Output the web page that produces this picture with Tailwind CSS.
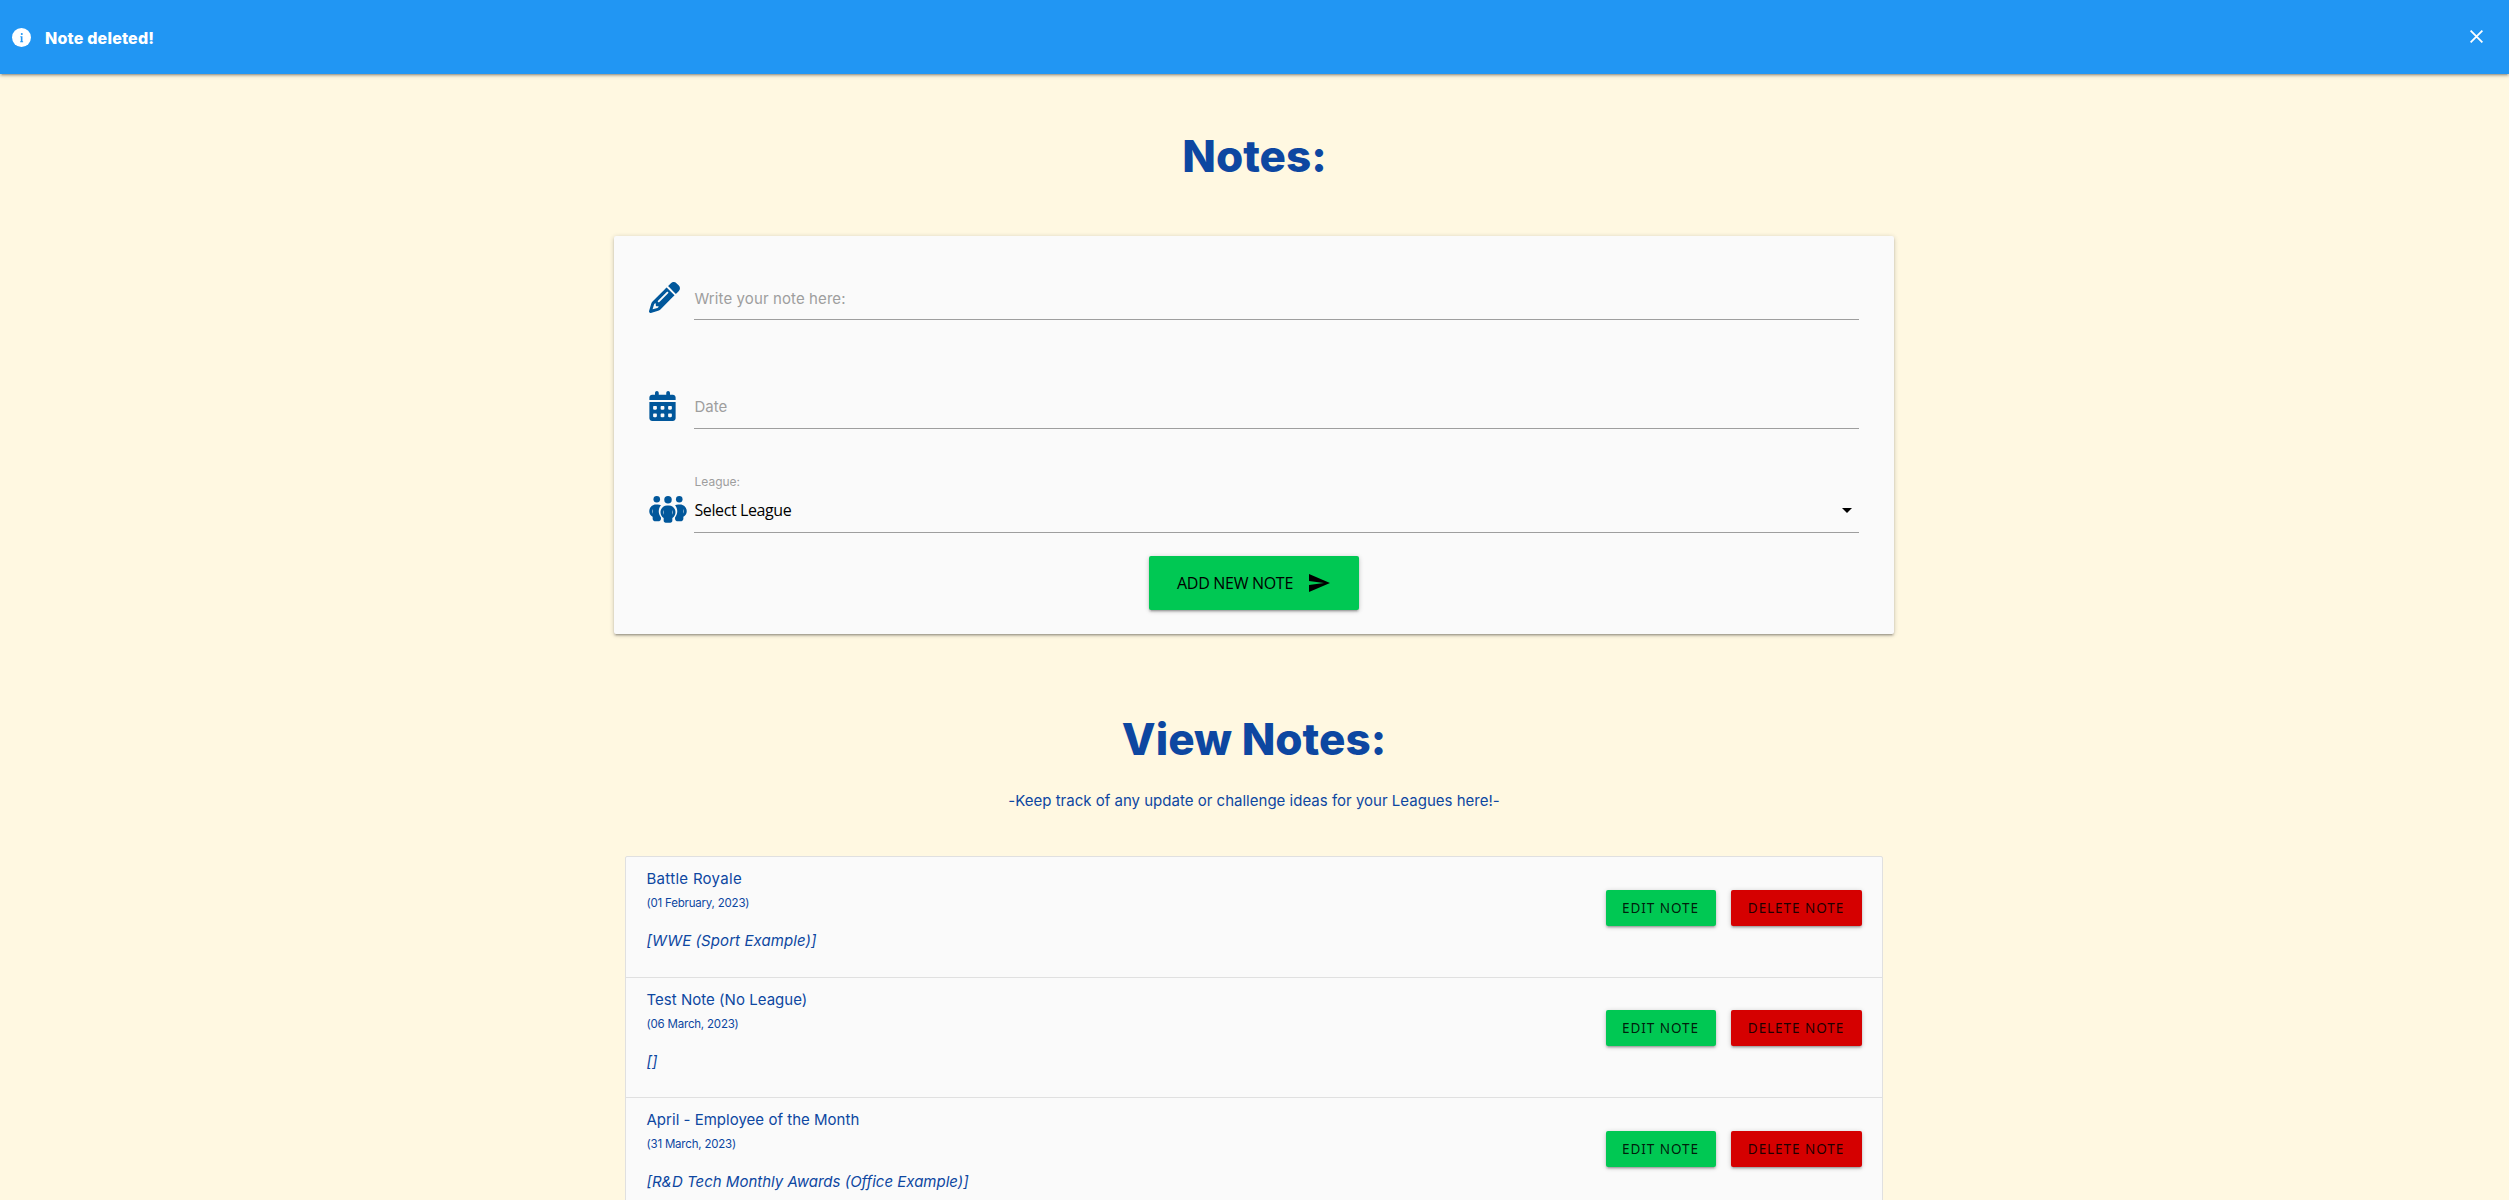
<!DOCTYPE html>
<html lang="en">
<head>
<meta charset="utf-8">
<title>Notes</title>
<script src="https://cdn.jsdelivr.net/npm/@tailwindcss/browser@4"></script>
</head>
<body class="bg-[#fff8e1] font-['Inter',sans-serif] text-[15px] text-[#0d47a1] h-[1200px] overflow-hidden">
<header class="h-[74px] bg-[#2196f3] flex items-center justify-between pl-[12px] pr-[26px] text-white shadow-[0_2px_2px_0_rgba(0,0,0,0.14),0_3px_1px_-2px_rgba(0,0,0,0.12),0_1px_5px_0_rgba(0,0,0,0.2)]">
  <div class="flex items-center">
    <svg class="size-[19px]" viewBox="0 0 20 20"><circle cx="10" cy="10" r="10" fill="#fff"/><g fill="#2196f3"><circle cx="10.300" cy="6.300" r="1.100"/><path d="M8.800 8.800h2.200v5.200h.7v.9H8.600V14h.7V9.700h-.5z"/></g></svg>
    <b class="ml-[14px] pt-px text-[16px] font-extrabold whitespace-nowrap tracking-[0.200px]">Note deleted!</b>
  </div>
  <svg class="size-[13px] mb-px" viewBox="0 0 13 13" stroke="currentColor" stroke-width="1.800"><path d="M.6.6l11.800 11.800M12.400.6L.6 12.400"/></svg>
</header>
<main class="flex flex-col items-center pr-[2px]">
  <h1 class="mt-[52px] h-[60px] leading-[60px] pl-[2px] text-[44px] font-extrabold">Notes:</h1>
  <form class="mt-[50px] w-[1280px] h-[398px] bg-[#fafafa] rounded-[2px] pl-[35px] pr-[35px] flex flex-col shadow-[0_2px_2px_0_rgba(0,0,0,0.14),0_3px_1px_-2px_rgba(0,0,0,0.12),0_1px_5px_0_rgba(0,0,0,0.2)]">
    <div class="flex h-[84px] items-end">
      <div class="w-[45px] h-[38px]"><svg class="size-[31px]" viewBox="0 0 512 512" fill="#01579b"><path d="M410.300 231l11.300-11.300-33.900-33.900-62.100-62.100L291.700 89.800l-11.300 11.300-22.600 22.600L58.600 322.900c-10.400 10.400-18 23.300-22.200 37.400L1 480.700c-2.500 8.400-.2 17.500 6.100 23.700s15.300 8.500 23.700 6.100l120.300-35.400c14.100-4.200 27-11.800 37.400-22.200L387.700 253.700 410.300 231zM160 399.400l-9.100 22.700c-4 3.100-8.500 5.400-13.300 6.900L59.400 452l23-78.100c1.400-4.900 3.800-9.400 6.900-13.300l22.700-9.100v32c0 8.800 7.200 16 16 16h32zM362.700 18.700L348.300 33.200 325.700 55.800 314.300 67.100l33.900 33.900 62.100 62.100 33.900 33.900 11.300-11.300 22.600-22.600 14.500-14.500c25-25 25-65.500 0-90.500L453.300 18.700c-25-25-65.500-25-90.500 0zm-47.400 168l-144 144c-6.200 6.200-16.400 6.200-22.600 0s-6.200-16.400 0-22.600l144-144c6.200-6.200 16.400-6.200 22.600 0s6.200 16.400 0 22.600z"/></svg></div>
      <label class="flex-1 h-[84px] border-b border-[#9e9e9e] text-[#9e9e9e] flex items-end pb-[9px] pl-px"><span class="tracking-[0.100px]">Write your note here:</span></label>
    </div>
    <div class="flex h-[109px] items-end">
      <div class="w-[45px] h-[38px]"><svg class="h-[30px] w-[27px]" viewBox="0 0 448 512" fill="#01579b"><path d="M128 0c17.700 0 32 14.300 32 32V64H288V32c0-17.700 14.300-32 32-32s32 14.300 32 32V64h48c26.500 0 48 21.500 48 48v40H0V112C0 85.500 21.500 64 48 64H96V32c0-17.700 14.300-32 32-32zM0 188H448V464c0 26.500-21.500 48-48 48H48c-26.500 0-48-21.500-48-48V188zm64 84v32c0 8.800 7.200 16 16 16h32c8.800 0 16-7.200 16-16V272c0-8.800-7.200-16-16-16H80c-8.800 0-16 7.200-16 16zm128 0v32c0 8.800 7.200 16 16 16h32c8.800 0 16-7.200 16-16V272c0-8.800-7.200-16-16-16H208c-8.800 0-16 7.200-16 16zm144-16c-8.800 0-16 7.200-16 16v32c0 8.800 7.200 16 16 16h32c8.800 0 16-7.200 16-16V272c0-8.800-7.200-16-16-16H336zM64 400v32c0 8.800 7.200 16 16 16h32c8.800 0 16-7.200 16-16V400c0-8.800-7.200-16-16-16H80c-8.800 0-16 7.200-16 16zm144-16c-8.800 0-16 7.200-16 16v32c0 8.800 7.200 16 16 16h32c8.800 0 16-7.200 16-16V400c0-8.800-7.200-16-16-16H208zm112 16v32c0 8.800 7.200 16 16 16h32c8.800 0 16-7.200 16-16V400c0-8.800-7.200-16-16-16H336c-8.800 0-16 7.200-16 16z"/></svg></div>
      <label class="flex-1 h-[84px] border-b border-[#9e9e9e] text-[#9e9e9e] flex items-end pb-[10px] pl-px"><span>Date</span></label>
    </div>
    <div class="flex h-[104px] items-end">
      <div class="w-[45px] h-[37px]"><svg class="h-[30px] w-[38px]" viewBox="0 0 640 512" fill="#01579b"><circle cx="128" cy="56" r="56"/><circle cx="320" cy="64" r="64"/><circle cx="512" cy="56" r="56"/><path fill-rule="evenodd" d="M112 144h32c20 0 40 5 56 14-24 28-38 65-38 104 0 40 15 76 38 103v25c0 20-12 36-30 40H88c-18-5-30-20-30-40v-35C22 335 0 301 0 262c0-65 50-118 112-118zM64 220v82c-12-24-12-58 0-82zM528 144h-32c-20 0-40 5-56 14 24 28 38 65 38 104 0 40-15 76-38 103v25c0 20 12 36 30 40h82c18-5 30-20 30-40v-35c36-20 58-54 58-93 0-65-50-118-112-118zM576 220v82c12-24 12-58 0-82z"/><path fill-rule="evenodd" d="M304 160h32c62 0 112 53 112 118 0 42-21 78-54 99v40c0 22-14 38-34 38h-80c-20 0-34-16-34-38v-40c-33-21-54-57-54-99 0-65 50-118 112-118zM246 238v80c-12-24-12-56 0-80zM394 238v80c12-24 12-56 0-80z"/></svg></div>
      <div class="flex-1 border-b border-[#9e9e9e] h-[61px] flex flex-col pl-px">
        <label class="mt-px text-[12px] leading-[18px] text-[#9e9e9e]">League:</label>
        <div class="flex items-center justify-between mt-[7px] pr-[7px] h-[24px] font-['Open_Sans',sans-serif] text-[16px] tracking-[-0.400px] text-black"><span>Select League</span><svg class="w-[10px] h-[5px]" viewBox="0 0 10 5"><path d="M0 0h10L5 5z"/></svg></div>
      </div>
    </div>
    <button type="button" class="self-center mt-[23px] w-[210px] h-[54px] bg-[#00c853] rounded-[2px] flex items-center pl-[28px] text-black font-['Open_Sans',sans-serif] text-[16px] tracking-[-0.300px] shadow-[0_2px_2px_0_rgba(0,0,0,0.14),0_3px_1px_-2px_rgba(0,0,0,0.12),0_1px_5px_0_rgba(0,0,0,0.2)]"><span class="w-[117px] whitespace-nowrap">ADD NEW NOTE</span><svg class="ml-[15px] w-[21px] h-[18px]" viewBox="2 3 21 18"><path d="M2.010 21L23 12 2.010 3 2 10l15 2-15 2z"/></svg></button>
  </form>
  <h1 class="mt-[75px] h-[60px] leading-[60px] pl-px text-[44px] font-extrabold">View Notes:</h1>
  <p class="mt-[21px] h-[22px] leading-[22px] pl-px tracking-[0.010px]">-Keep track of any update or challenge ideas for your Leagues here!-</p>
  <ul id="list" class="mt-[44px] w-[1258px] border border-[#e0e0e0] bg-[#fafafa] rounded-[2px]"></ul>
</main>
<script>
const notes=[["Battle Royale","(01 February, 2023)","[WWE (Sport Example)]",0.3,0.08],["Test Note (No League)","(06 March, 2023)","[]",0.03,0],["April - Employee of the Month","(31 March, 2023)","[R&amp;D Tech Monthly Awards (Office Example)]",0.02,0]];
document.getElementById('list').innerHTML=notes.map(n=>`<li class="h-[120.500px] border-b border-[#e0e0e0] pl-[21px] pr-5 flex justify-between">
<div class="pt-[10px]"><div class="h-[24px] leading-[24px]" style="letter-spacing:${n[3]}px">${n[0]}</div><div class="h-[24px] leading-[24px] text-[11.500px] tracking-[-0.200px]">${n[1]}</div><div class="mt-[14px] h-[24px] leading-[24px] italic" style="letter-spacing:${n[4]}px">${n[2]}</div></div>
<div class="pt-[32.700px] flex gap-[15px] font-['Noto_Sans',sans-serif] text-[13.500px] tracking-[0.950px]">
<button class="w-[110px] h-[36px] bg-[#00c853] text-black/87 rounded-[2px] whitespace-nowrap shadow-[0_2px_2px_0_rgba(0,0,0,0.14),0_3px_1px_-2px_rgba(0,0,0,0.12),0_1px_5px_0_rgba(0,0,0,0.2)]">EDIT NOTE</button>
<button class="w-[131px] h-[36px] bg-[#d50000] text-black/87 rounded-[2px] whitespace-nowrap shadow-[0_2px_2px_0_rgba(0,0,0,0.14),0_3px_1px_-2px_rgba(0,0,0,0.12),0_1px_5px_0_rgba(0,0,0,0.2)]">DELETE NOTE</button></div></li>`).join('');
</script>
</body>
</html>
